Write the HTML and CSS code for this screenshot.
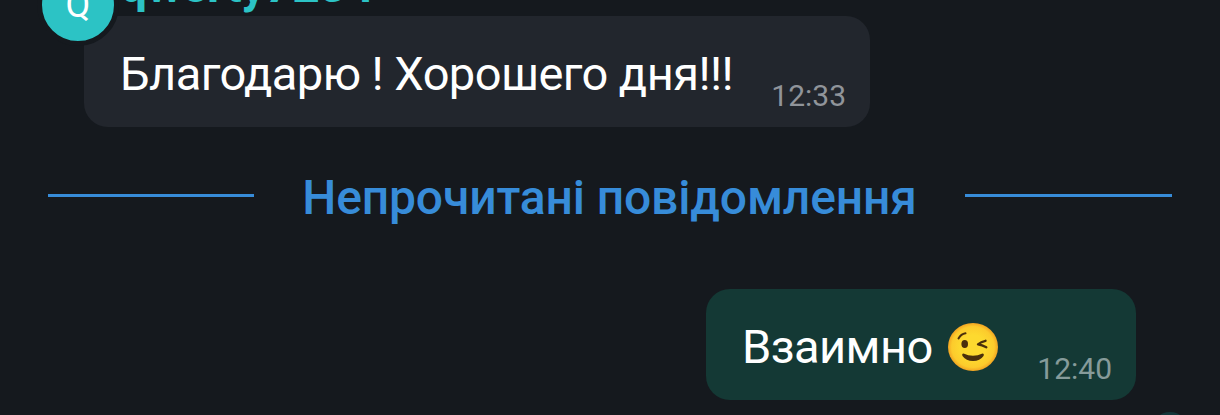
FILE: index.html
```html
<!DOCTYPE html>
<html lang="uk">
<head>
  <meta charset="UTF-8" />
  <meta name="viewport" content="width=device-width, initial-scale=1.0" />
  <title>Chat</title>
  <link rel="stylesheet" href="styles.css">
</head>
<body>
  <div class="chat">
    <div class="message incoming">
      <div class="avatar">Q</div>
      <div class="sender">qwerty7234</div>
      <div class="bubble">
        <span class="text">Благодарю ! Хорошего дня!!!</span>
        <span class="time">12:33</span>
      </div>
    </div>

    <div class="unread">
      <span class="line"></span>
      <span class="label">Непрочитані повідомлення</span>
      <span class="line"></span>
    </div>

    <div class="message outgoing">
      <div class="bubble">
        <span class="text">Взаимно</span>
        <svg class="emoji" viewBox="0 0 50 48">
          <defs>
            <radialGradient id="face" cx="50%" cy="50%" r="50%">
              <stop offset="0.5" stop-color="#fdd92f" />
              <stop offset="0.85" stop-color="#fccb2c" />
              <stop offset="1" stop-color="#f2a422" />
            </radialGradient>
          </defs>
          <ellipse cx="25" cy="24" rx="25" ry="24" fill="url(#face)" />
          <ellipse cx="16.7" cy="21" rx="3.3" ry="4" fill="#4a2f0c" />
          <path d="M10.5 15.5Q13 11 17.5 10.3" fill="none" stroke="#4a2f0c" stroke-width="2" stroke-linecap="round" />
          <path d="M37.5 17.8Q33 18.8 30 21.3Q34 22 38.3 24.3" fill="none" stroke="#4a2f0c" stroke-width="2.4" stroke-linecap="round" stroke-linejoin="round" />
          <path d="M15.5 30.5Q25 35 34.5 30.5Q36.5 30.5 35.5 33Q32 38 25 38Q18 38 14.5 33Q13.5 30.5 15.5 30.5Z" fill="#4a2f0c" />
        </svg>
        <span class="time">12:40</span>
      </div>
      <div class="status"></div>
    </div>
  </div>
</body>
</html>
```

FILE: styles.css
```css
* {
  box-sizing: border-box;
}
body {
  margin: 0;
  background: #15191e;
  font-family: Roboto, sans-serif;
  color: #fff;
}
.chat {
  height: 415px;
  overflow: hidden;
  position: relative;
  display: flex;
  flex-direction: column;
}
.message {
  display: flex;
}
.incoming {
  position: relative;
  padding: 16px 0 0 84px;
}
.avatar {
  position: absolute;
  left: 37px;
  top: -36px;
  width: 82px;
  height: 82px;
  border: 5px solid #15191e;
  border-radius: 50%;
  background: #2cc3c5;
  font-size: 36px;
  line-height: 72px;
  text-align: center;
}
.sender {
  position: absolute;
  left: 120px;
  top: -42px;
  font-size: 48px;
  font-weight: 700;
  line-height: 56px;
  letter-spacing: -0.4px;
  color: #2cc3c5;
}
.bubble {
  display: flex;
  height: 111px;
  padding: 0 24px 0 36px;
  border-radius: 24px;
  background: #22262d;
}
.incoming .bubble {
  width: 786px;
}
.text {
  font-size: 47px;
  line-height: 56px;
  letter-spacing: -0.56px;
  padding-top: 30px;
  white-space: nowrap;
}
.time {
  margin-left: auto;
  padding-top: 62px;
  font-size: 30px;
  line-height: 36px;
  color: #90949a;
}
.unread {
  display: flex;
  align-items: center;
  justify-content: space-between;
  height: 56px;
  margin-top: 43px;
  padding: 0 48px;
  color: #378cd9;
}
.line {
  width: 206px;
  height: 3px;
  margin-bottom: 6px;
  background: #378cd9;
}
.line:last-child {
  width: 207px;
}
.label {
  font-size: 48px;
  font-weight: 500;
  line-height: 56px;
  letter-spacing: -0.14px;
}
.outgoing {
  position: relative;
  justify-content: flex-end;
  margin-top: 63px;
  padding-right: 84px;
}
.outgoing .bubble {
  width: 430px;
  background: #143935;
}
.outgoing .time {
  color: #869b9a;
}
.emoji {
  width: 50px;
  height: 48px;
  margin: 34px 0 0 15px;
}
.status {
  position: absolute;
  right: 32px;
  top: 123px;
  width: 36px;
  height: 36px;
  border-radius: 50%;
  background: #14363a;
}
```
